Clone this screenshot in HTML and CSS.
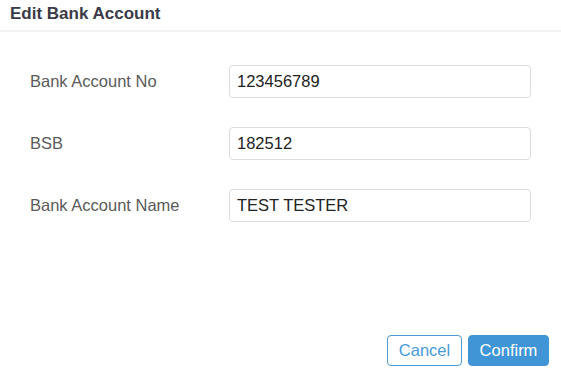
FILE: index.html
```html
<!DOCTYPE html>
<html lang="en">
<head>
  <meta charset="UTF-8" />
  <title>Edit Bank Account</title>
  <link rel="stylesheet" href="styles.css">
</head>
<body>
  <div class="dialog">
    <div class="dialog-header">Edit Bank Account</div>

    <div class="dialog-body">
      <div class="field">
        <label for="accountNo">Bank Account No</label>
        <input id="accountNo" type="text" value="123456789" />
      </div>
      <div class="field">
        <label for="bsb">BSB</label>
        <input id="bsb" type="text" value="182512" />
      </div>
      <div class="field">
        <label for="accountName">Bank Account Name</label>
        <input id="accountName" type="text" value="TEST TESTER" />
      </div>
    </div>

    <div class="dialog-footer">
      <button class="btn btn-outline">Cancel</button>
      <button class="btn btn-primary">Confirm</button>
    </div>
  </div>
</body>
</html>
```

FILE: styles.css
```css
* {
  box-sizing: border-box;
  margin: 0;
  padding: 0;
  font-family: 'Liberation Sans', Arial, sans-serif;
}
body {
  background: #fff;
}
.dialog {
  display: flex;
  flex-direction: column;
  height: 100vh;
}
.dialog-header {
  height: 32px;
  padding: 4px 10px 0;
  font-size: 17px;
  font-weight: 700;
  color: #3a3a48;
  border-bottom: 2px solid #f2f2f2;
}
.dialog-body {
  padding: 33px 30px 0;
  display: flex;
  flex-direction: column;
  gap: 29px;
}
.field {
  display: flex;
  align-items: center;
}
.field label {
  width: 199px;
  font-size: 16.5px;
  color: #5a5a5a;
}
.field input {
  width: 302px;
  height: 33px;
  padding: 0 7px;
  font-size: 16.5px;
  color: #222;
  border: 1px solid #dcdcdc;
  border-radius: 4px;
  outline: none;
}
.dialog-footer {
  margin-top: auto;
  display: flex;
  justify-content: flex-end;
  gap: 6px;
  padding: 0 12px 8px 0;
}
.btn {
  height: 31px;
  font-size: 16.5px;
  border-radius: 4px;
  cursor: pointer;
}
.btn-outline {
  width: 75px;
  background: #fff;
  border: 1.5px solid #4a9bd8;
  color: #4a9bd8;
}
.btn-primary {
  width: 81px;
  background: #3f95d6;
  border: 1px solid #3f95d6;
  color: #fff;
}
```
